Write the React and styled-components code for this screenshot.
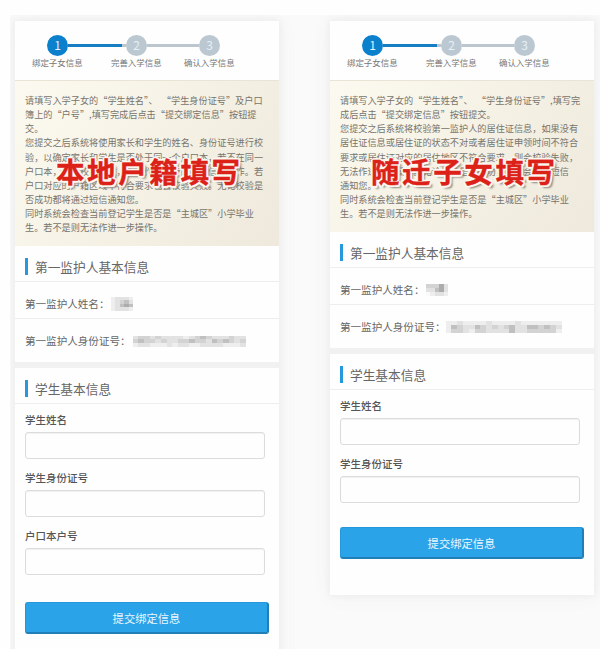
import React from "react";
import styled, { createGlobalStyle } from "styled-components";

const GlobalStyle = createGlobalStyle`
  * { box-sizing: border-box; }
  body {
    margin: 0;
    background: #fefefe;
    font-family: "Noto Sans CJK SC", "Noto Sans", sans-serif;
    color: #666;
  }
`;

const Page = styled.main`
  width: 600px;
  height: 649px;
  padding: 15px 0 0 10px;
  overflow: hidden;
`;

const Canvas = styled.div`
  display: flex;
  align-items: flex-start;
  gap: 51px;
  height: 634px;
  padding: 6px 6px 0 5px;
  background: #fafafa;
  overflow: hidden;
`;

const Card = styled.article`
  flex: none;
  width: 264px;
  height: ${(p) => p.$height}px;
  background: #fefefe;
  box-shadow: 0 0 6px 1px #ededed, 0 0 20px #f1f1f1;
`;

const Steps = styled.ol`
  display: flex;
  height: 59px;
  margin: 0;
  padding: 14px 0 0 17px;
  list-style: none;
`;

const Step = styled.li`
  display: flex;
  flex-direction: column;
  flex: none;
  width: ${(p) => p.$width}px;
`;

const StepTrack = styled.div`
  display: flex;
  align-items: center;
  height: 21px;
  padding-left: 15px;
`;

const StepDot = styled.span`
  flex: none;
  width: 21px;
  height: 21px;
  border-radius: 50%;
  background: ${(p) => (p.$active ? "#0b80cd" : "#bcc8d1")};
  color: ${(p) => (p.$active ? "#e4f3fc" : "#e4f0f7")};
  font-size: 12px;
  line-height: 20px;
  text-align: center;
`;

const StepLine = styled.span`
  flex: none;
  width: ${(p) => p.$width}px;
  height: 3px;
  background: ${(p) => (p.$active ? "#167fc4" : "#bcc6cf")};
`;

const StepLabel = styled.span`
  width: 54px;
  margin-top: -1px;
  font-size: 8.45px;
  line-height: 14px;
  white-space: nowrap;
  color: #777;
`;

const Notice = styled.section`
  position: relative;
  height: ${(p) => p.$height}px;
  padding: 12px 0 0 10px;
  border-top: 1px solid #e9e4d6;
  background: linear-gradient(125deg, #fcfaf0 0%, #f5f1e5 50%, #eee9dc 100%);
`;

const NoticeLine = styled.p`
  margin: 0;
  height: 14.15px;
  font-size: 9.16px;
  line-height: 14.15px;
  white-space: pre;
  color: #77746d;
`;

const Stamp = styled.strong`
  position: absolute;
  left: 41px;
  top: 70px;
  font-size: 28.5px;
  font-weight: 700;
  line-height: 40px;
  letter-spacing: 2.6px;
  white-space: nowrap;
  color: #dc2118;
  -webkit-text-stroke: 0.4px #dc2118;
  text-shadow:
    2px 0 0 #fbf7ef, -2px 0 0 #fbf7ef, 0 2px 0 #fbf7ef, 0 -2px 0 #fbf7ef,
    1.5px 1.5px 0 #fbf7ef, -1.5px 1.5px 0 #fbf7ef,
    1.5px -1.5px 0 #fbf7ef, -1.5px -1.5px 0 #fbf7ef,
    3px 3px 2px #8b877e;
`;

const SectionTitle = styled.h2`
  display: flex;
  align-items: center;
  gap: 7px;
  height: 36px;
  margin: 0;
  padding: 6px 0 0 10px;
  border-bottom: 1px solid #eee;
  font-size: 12.7px;
  font-weight: 400;
  line-height: 18px;
  color: #666;

  &::before {
    content: "";
    width: 3px;
    height: 17px;
    background: #2698dc;
  }
`;

const InfoRow = styled.div`
  display: flex;
  align-items: center;
  height: ${(p) => (p.$last ? 43 : 37)}px;
  padding: ${(p) => (p.$last ? "1px 0 0 10px" : "7px 0 0 10px")};
  border-bottom: ${(p) => (p.$last ? "none" : "1px solid #eee")};
  font-size: 10.57px;
  line-height: 18px;
  white-space: nowrap;
`;

const Mosaic = styled.span`
  display: grid;
  grid-template-columns: repeat(${(p) => p.$cols}, 1fr);
  width: ${(p) => p.$width}px;
  height: ${(p) => p.$height}px;
  margin-left: ${(p) => p.$gap}px;
`;

const Cell = styled.i`
  background: ${(p) => p.$tone};
`;

const Divider = styled.div`
  height: 6px;
  background: #f1f1f1;
`;

const Form = styled.form`
  display: flex;
  flex-direction: column;
  padding: 8px 0 0 10px;
`;

const Field = styled.label`
  display: flex;
  flex-direction: column;
  height: 58px;
`;

const FieldLabel = styled.span`
  height: 20px;
  font-size: 10.5px;
  font-weight: 500;
  line-height: 16px;
  color: #555;
`;

const Input = styled.input`
  width: 240px;
  height: 27px;
  padding: 0 8px;
  border: 1px solid #dcdcdc;
  border-radius: 3px;
  background: #fefefe;
  box-shadow: inset 0 1px 1px #f1f1f1;
  outline: none;
`;

const Submit = styled.button`
  width: 244px;
  height: 32px;
  margin-top: ${(p) => p.$gap}px;
  padding: 0;
  border: 1px solid #2697da;
  border-right: 2px solid #1f80b8;
  border-bottom: 2px solid #1f7fb6;
  border-radius: 3px;
  background: #2aa3e8;
  color: #e9f7ff;
  font-family: inherit;
  font-size: 11.3px;
  line-height: 28px;
`;

const SHADES = ["#fafafa", "#eeeeee", "#e2e2e2", "#d3d3d3", "#c0c0c0", "#acacac"];

function Redacted({ rows, width, height, gap }) {
  return (
    <Mosaic $cols={rows[0].length} $width={width} $height={height} $gap={gap}>
      {rows.join("").split("").map((shade, i) => (
        <Cell key={i} $tone={SHADES[shade]} />
      ))}
    </Mosaic>
  );
}

function Progress() {
  return (
    <Steps>
      <Step $width={79}>
        <StepTrack>
          <StepDot $active>1</StepDot>
          <StepLine $active $width={54} />
          <StepLine $width={4} />
        </StepTrack>
        <StepLabel>绑定子女信息</StepLabel>
      </Step>
      <Step $width={73}>
        <StepTrack>
          <StepDot>2</StepDot>
          <StepLine $width={52} />
        </StepTrack>
        <StepLabel>完善入学信息</StepLabel>
      </Step>
      <Step $width={54}>
        <StepTrack>
          <StepDot>3</StepDot>
        </StepTrack>
        <StepLabel>确认入学信息</StepLabel>
      </Step>
    </Steps>
  );
}

function BindingCard({ data }) {
  return (
    <Card $height={data.height}>
      <Progress />
      <Notice $height={data.noticeHeight}>
        {data.notice.map((line) => (
          <NoticeLine key={line}>{line}</NoticeLine>
        ))}
        <Stamp>{data.stamp}</Stamp>
      </Notice>
      <SectionTitle>第一监护人基本信息</SectionTitle>
      <InfoRow>
        第一监护人姓名：
        <Redacted {...data.name} />
      </InfoRow>
      <InfoRow $last>
        第一监护人身份证号：
        <Redacted {...data.idNumber} />
      </InfoRow>
      <Divider />
      <SectionTitle>学生基本信息</SectionTitle>
      <Form onSubmit={(e) => e.preventDefault()}>
        {data.fields.map((field) => (
          <Field key={field}>
            <FieldLabel>{field}</FieldLabel>
            <Input />
          </Field>
        ))}
        <Submit $gap={data.submitGap}>提交绑定信息</Submit>
      </Form>
    </Card>
  );
}

const local = {
  height: 650,
  noticeHeight: 166,
  submitGap: 16,
  stamp: "本地户籍填写",
  notice: [
    "请填写入学子女的“学生姓名”、  “学生身份证号”及户口",
    "簿上的“户号”,填写完成后点击“提交绑定信息”按钮提",
    "交。",
    "您提交之后系统将使用家长和学生的姓名、身份证号进行校",
    "验，以确定家长和学生是否处于同一个户口本，若不在同一",
    "户口本，则会校验失败，无法作进一步的绑定信息操作。若",
    "户口对应的户籍区域不符合要求也会校验失败。无论校验是",
    "否成功都将通过短信通知您。",
    "同时系统会检查当前登记学生是否是“主城区”小学毕业",
    "生。若不是则无法作进一步操作。",
  ],
  name: { rows: ["12221", "12342", "12454", "12221"], width: 23, height: 14, gap: 1 },
  idNumber: {
    rows: ["23323222212343222322", "34332322334332434323", "12211121221122221112"],
    width: 113,
    height: 11,
    gap: 2,
  },
  fields: ["学生姓名", "学生身份证号", "户口本户号"],
};

const migrant = {
  height: 574,
  noticeHeight: 152,
  submitGap: 13,
  stamp: "随迁子女填写",
  notice: [
    "请填写入学子女的“学生姓名”、  “学生身份证号”,填写完",
    "成后点击“提交绑定信息”按钮提交。",
    "您提交之后系统将校验第一监护人的居住证信息，如果没有",
    "居住证信息或居住证的状态不对或者居住证申领时间不符合",
    "要求或居住证对应的居住地区不符合要求，则会校验失败，",
    "无法作进一步操作。无论校验是否成功，都将会通过短信",
    "通知您。",
    "同时系统会检查当前登记学生是否是“主城区”小学毕业",
    "生。若不是则无法作进一步操作。",
  ],
  name: { rows: ["33352", "22452", "01221"], width: 23, height: 12, gap: 1 },
  idNumber: {
    rows: ["11211112111121111111", "14322432323422443432", "13321332222422333331"],
    width: 116,
    height: 12,
    gap: 0,
  },
  fields: ["学生姓名", "学生身份证号"],
};

export default function App() {
  return (
    <>
      <GlobalStyle />
      <Page>
        <Canvas>
          <BindingCard data={local} />
          <BindingCard data={migrant} />
        </Canvas>
      </Page>
    </>
  );
}
